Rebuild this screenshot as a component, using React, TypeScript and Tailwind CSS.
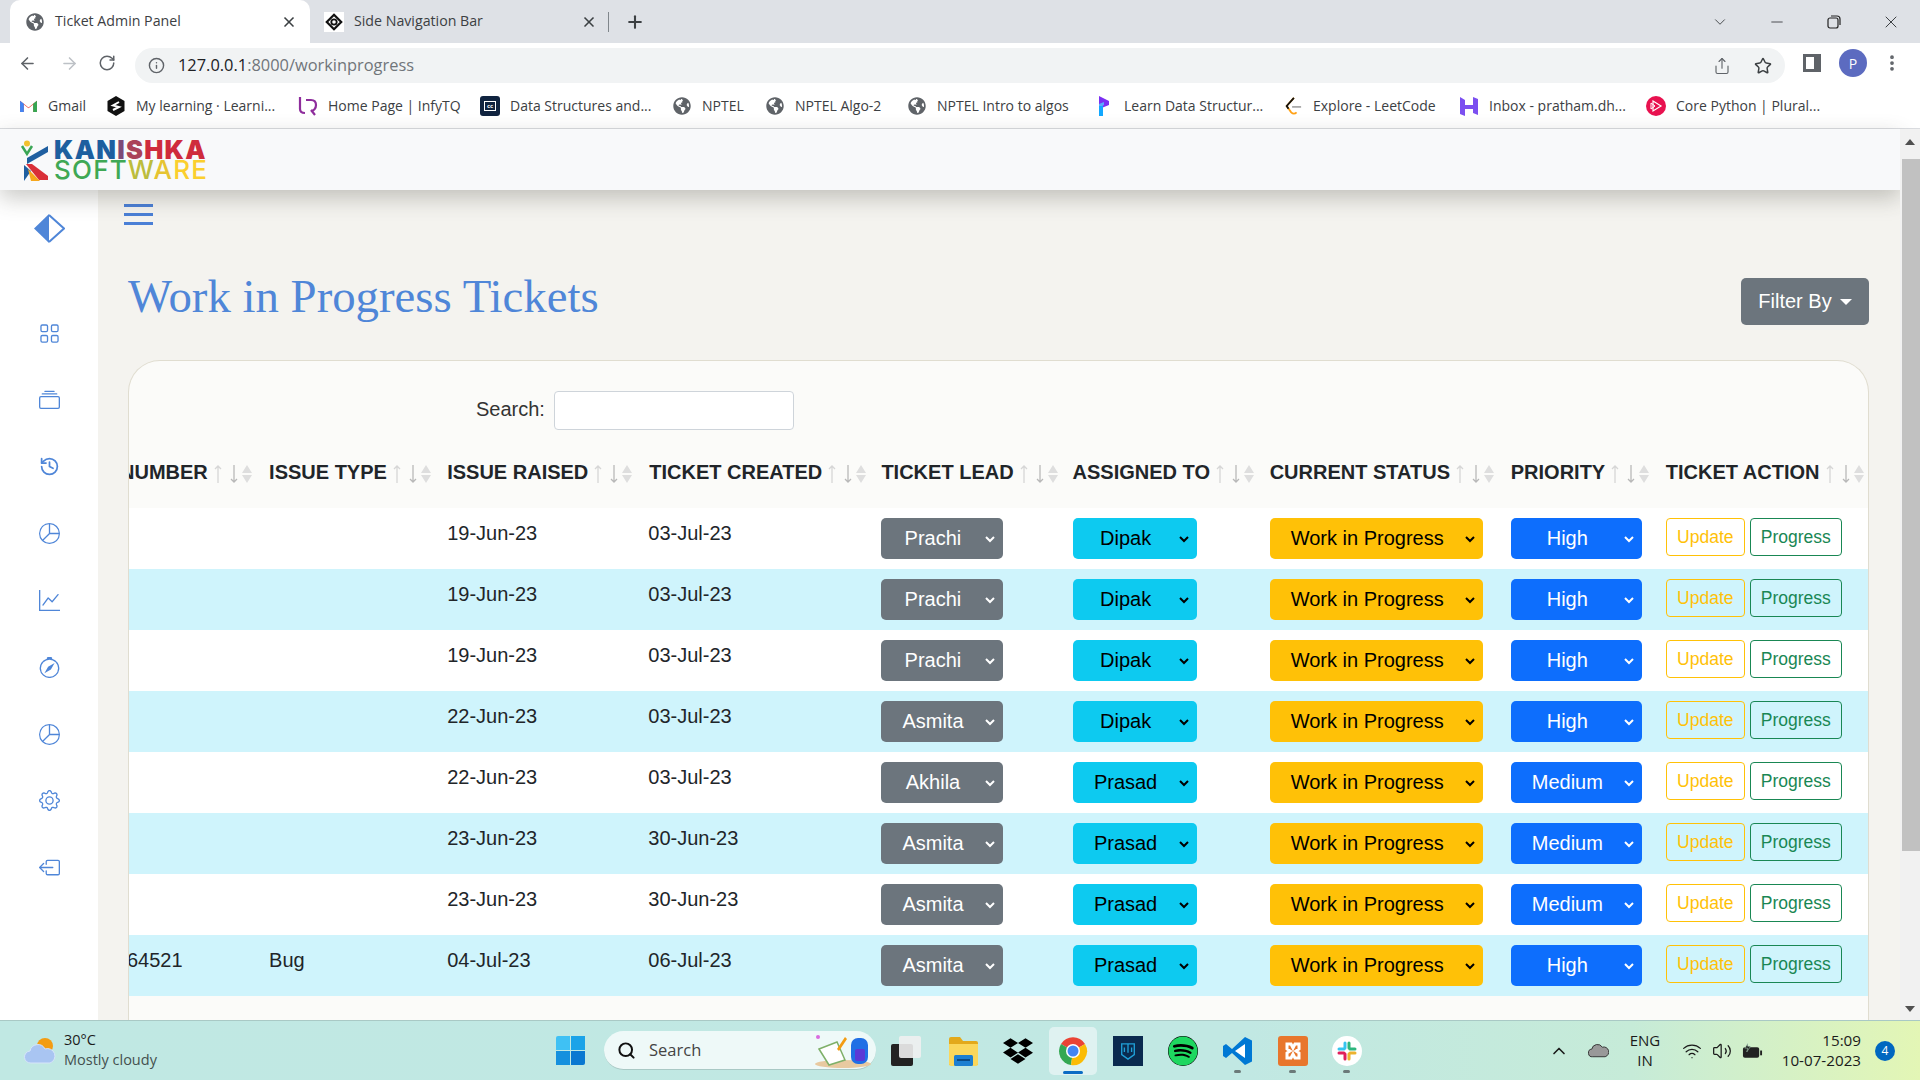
import React from "react";
import { BsGrid, BsCollection, BsPieChart, BsGraphUp, BsCompass, BsGear, BsBoxArrowLeft } from "react-icons/bs";
import { FaGlobeAmericas, FaDropbox, FaSpotify } from "react-icons/fa";
import { ArrowLeft, ArrowRight, RotateCw, Info, Star, X, Plus, ChevronDown, Minus, Search, ChevronUp, Wifi, Volume2, EllipsisVertical, History, Share } from "lucide-react";

const Globe = () => <FaGlobeAmericas className="w-[18px] h-[18px] text-[#5f6368] shrink-0" />;

const bookmarks: { label: string; w: string; icon: React.ReactNode }[] = [
  { label: "Gmail", w: "w-[88px]", icon: <svg viewBox="0 0 20 16" className="w-[19px] h-[15px]"><path d="M1 15V3l9 7 9-7v12h-4V7l-5 4-5-4v8z" fill="#ea4335" /><path d="M1 15V3l4 3v9z" fill="#4285f4" /><path d="M19 15V3l-4 3v9z" fill="#34a853" /></svg> },
  { label: "My learning · Learni...", w: "w-[192px]", icon: <svg viewBox="0 0 20 20" className="w-[20px] h-[20px]"><path d="M10 0l8.5 5v10L10 20 1.500 15V5z" fill="#111" /><path d="M13 6L7 9.500 13 11 7 14" fill="none" stroke="#fff" strokeWidth="2" /></svg> },
  { label: "Home Page | InfyTQ", w: "w-[182px]", icon: <svg viewBox="0 0 20 20" className="w-[20px] h-[20px]" fill="none" stroke="#8e2d9c" strokeWidth="2.200"><path d="M2 1v12c0 3 2 4 5 4" /><path d="M8 4h5c3 0 5 2 5 5s-2 6-5 6" /><path d="M13 14l4 5" /></svg> },
  { label: "Data Structures and...", w: "w-[192px]", icon: <span className="w-[20px] h-[20px] rounded-[3px] bg-[#10233f] flex items-center justify-center"><span className="w-[12px] h-[10px] border border-white text-[6px] leading-[8px] text-white text-center font-bold">cc</span></span> },
  { label: "NPTEL", w: "w-[93px]", icon: <Globe /> },
  { label: "NPTEL Algo-2", w: "w-[142px]", icon: <Globe /> },
  { label: "NPTEL Intro to algos", w: "w-[187px]", icon: <Globe /> },
  { label: "Learn Data Structur...", w: "w-[189px]", icon: <svg viewBox="0 0 16 20" className="w-[16px] h-[20px]"><path d="M3 0l10 5v4L3 13z" fill="#7b2ff2" /><path d="M3 8l5-2v3l-5 3z" fill="#5aa9ff" /><path d="M3 10h4v10H3z" fill="#12a8ff" /></svg> },
  { label: "Explore - LeetCode", w: "w-[176px]", icon: <svg viewBox="0 0 20 20" className="w-[18px] h-[20px]" fill="none" strokeWidth="2"><path d="M11 1L3 10l5 7c2 2 4 2 6 0" stroke="#ffa116" /><path d="M11 1L3 10l2 3" stroke="#111" /><path d="M9 11h10" stroke="#aaa" /></svg> },
  { label: "Inbox - pratham.dh...", w: "w-[187px]", icon: <svg viewBox="0 0 18 20" className="w-[18px] h-[20px]" fill="#7b4ff0"><path d="M0 1l5 3v5h8V1l5 2v16l-5-2v-4H5v7l-5-2z" /></svg> },
  { label: "Core Python | Plural...", w: "w-[180px]", icon: <svg viewBox="0 0 20 20" className="w-[20px] h-[20px]"><circle cx="10" cy="10" r="10" fill="#e8114f" /><path d="M7 5l8 5-8 5z" fill="none" stroke="#fff" strokeWidth="1.200" /><path d="M5 7l4 3-4 3z" fill="none" stroke="#fff" strokeWidth="1" /></svg> },
];

type Row = { num?: string; type?: string; raised: string; created: string; lead: string; to: string; prio: string };
const rows: Row[] = [
  { raised: "19-Jun-23", created: "03-Jul-23", lead: "Prachi", to: "Dipak", prio: "High" },
  { raised: "19-Jun-23", created: "03-Jul-23", lead: "Prachi", to: "Dipak", prio: "High" },
  { raised: "19-Jun-23", created: "03-Jul-23", lead: "Prachi", to: "Dipak", prio: "High" },
  { raised: "22-Jun-23", created: "03-Jul-23", lead: "Asmita", to: "Dipak", prio: "High" },
  { raised: "22-Jun-23", created: "03-Jul-23", lead: "Akhila", to: "Prasad", prio: "Medium" },
  { raised: "23-Jun-23", created: "30-Jun-23", lead: "Asmita", to: "Prasad", prio: "Medium" },
  { raised: "23-Jun-23", created: "30-Jun-23", lead: "Asmita", to: "Prasad", prio: "Medium" },
  { num: "64521", type: "Bug", raised: "04-Jul-23", created: "06-Jul-23", lead: "Asmita", to: "Prasad", prio: "High" },
];

const SortIcons = () => (
  <span className="inline-flex items-center ml-[6px] align-middle">
    <svg viewBox="0 0 8 20" className="w-[8px] h-[20px]" fill="none" stroke="#d6d6d6" strokeWidth="1.300"><path d="M4 19V2M1 5l3-3 3 3" /></svg>
    <svg viewBox="0 0 8 20" className="w-[8px] h-[20px] ml-[8px]" fill="none" stroke="#b8b8b8" strokeWidth="1.300"><path d="M4 1v17M1 15l3 3 3-3" /></svg>
    <svg viewBox="0 0 10 20" className="w-[10px] h-[20px] ml-[4px]" fill="#dedede"><path d="M5 1l5 8H0zM5 19l-5-8h10z" /></svg>
  </span>
);

const Sel = ({ label, cls }: { label: string; cls: string }) => (
  <div className={`relative h-[41px] rounded-[5px] pl-[14px] pr-[32px] flex items-center justify-center text-[20px] ${cls}`}>
    <span className="pb-[2px]">{label}</span>
    <svg viewBox="0 0 10 7" className="absolute right-[8px] top-[18px] w-[10px] h-[7px]" fill="none" stroke="currentColor" strokeWidth="2"><path d="M1 1l4 4 4-4" /></svg>
  </div>
);

const navIcons = [BsGrid, BsCollection, History, BsPieChart, BsGraphUp, BsCompass, BsPieChart, BsGear, BsBoxArrowLeft];
const headers: string[] = ["ISSUE TYPE", "ISSUE RAISED", "TICKET CREATED", "TICKET LEAD", "ASSIGNED TO", "CURRENT STATUS", "PRIORITY", "TICKET ACTION"];

export default function App() {
  return (
    <div className="w-[1920px] h-[1080px] overflow-hidden flex flex-col bg-white text-[#212529] font-['Liberation_Sans',Arial,sans-serif]">
      {/* tab strip */}
      <div className="h-[43px] bg-[#dee1e6] flex items-stretch pl-[10px] text-[14.2px] text-[#3c4043] font-['Open_Sans',sans-serif] shrink-0">
        <div className="w-[300px] bg-white rounded-t-[10px] flex items-center pl-[16px] pr-[13px]">
          <FaGlobeAmericas className="w-[18px] h-[18px] text-[#5f6368]" />
          <span className="ml-[11px] pb-[2px]">Ticket Admin Panel</span>
          <X className="ml-auto w-[16px] h-[16px] text-[#3c4043]" strokeWidth={2.500} />
        </div>
        <div className="w-[298px] flex items-center pl-[14px] pr-[11px]">
          <span className="w-[20px] h-[20px] bg-white flex items-center justify-center">
            <svg viewBox="0 0 20 20" className="w-[18px] h-[18px]" fill="none" stroke="#111" strokeWidth="2.500"><path d="M10 2l8 8-8 8-8-8z" /><circle cx="10" cy="10" r="3" strokeWidth="2" /></svg>
          </span>
          <span className="ml-[10px] pb-[2px]">Side Navigation Bar</span>
          <X className="ml-auto w-[16px] h-[16px] text-[#3c4043]" strokeWidth={2.500} />
        </div>
        <div className="w-px h-[20px] bg-[#80868b] self-center" />
        <Plus className="self-center ml-[16px] w-[20px] h-[20px] text-[#3c4043]" strokeWidth={2.500} />
        <div className="ml-auto flex items-center pr-[19px] text-[#3c4043]">
          <ChevronDown className="w-[18px] h-[18px]" strokeWidth={1.200} />
          <Minus className="ml-[39px] w-[18px] h-[18px]" strokeWidth={1.200} />
          <svg viewBox="0 0 14 14" className="ml-[41px] w-[14px] h-[16px]" fill="none" stroke="#222" strokeWidth="1.200"><rect x="1" y="3" width="10" height="10" rx="2" /><path d="M4 1h6a3 3 0 013 3v6" /></svg>
          <X className="ml-[40px] w-[20px] h-[20px]" strokeWidth={1.200} />
        </div>
      </div>
      {/* toolbar */}
      <div className="h-[40px] flex items-center bg-white shrink-0 relative">
        <ArrowLeft className="ml-[18px] w-[19px] h-[19px] text-[#5f6368]" strokeWidth={2} />
        <ArrowRight className="ml-[23px] w-[19px] h-[19px] text-[#bdc1c6]" strokeWidth={2} />
        <RotateCw className="ml-[19px] w-[18px] h-[18px] text-[#5f6368]" strokeWidth={2} />
        <div className="ml-[19px] mt-[5px] w-[1650px] h-[35px] rounded-full bg-[#f1f3f4] flex items-center pl-[13px] pr-[10px]">
          <Info className="w-[17px] h-[17px] text-[#5f6368]" strokeWidth={2} />
          <span className="ml-[13px] text-[16.4px] text-[#70757a] font-['Open_Sans',sans-serif]"><span className="text-[#202124]">127.0.0.1</span>:8000/workinprogress</span>
          <Share className="ml-auto mr-[1px] w-[18px] h-[18px] text-[#5f6368]" strokeWidth={1.500} />
          <Star className="ml-[22px] mr-[3px] w-[18px] h-[18px] text-[#3c4043]" strokeWidth={2} />
        </div>
        <div className="ml-[18px] w-[18px] h-[18px] border-[3px] border-[#5f6368] border-r-[7px]" />
        <div className="ml-[18px] w-[28px] h-[28px] rounded-full bg-[#5c6bc0] text-white text-[14px] flex items-center justify-center font-['Open_Sans',sans-serif]">P</div>
        <EllipsisVertical className="ml-[15px] w-[20px] h-[20px] text-[#5f6368]" strokeWidth={2.500} />
      </div>
      {/* bookmarks */}
      <div className="h-[46px] flex items-center pl-[18px] border-b border-[#dadce0] bg-white text-[14px] text-[#3c4043] font-['Open_Sans',sans-serif] shrink-0">
        {bookmarks.map((b) => (
          <div key={b.label} className={`${b.w} flex items-center shrink-0 whitespace-nowrap`}>
            <span className="w-[20px] flex justify-center shrink-0">{b.icon}</span>
            <span className="ml-[10px]">{b.label}</span>
          </div>
        ))}
      </div>
      {/* page */}
      <div className="flex-1 flex min-h-0">
        <div className="flex-1 flex flex-col min-w-0">
          <div className="h-[61px] bg-[#f8f9fa] relative z-10 shadow-[0_8px_22px_rgba(60,60,50,0.28)] pl-[19px] flex items-center shrink-0">
            <svg viewBox="0 0 30 42" className="w-[30px] h-[42px] mt-[2px]">
              <circle cx="8" cy="3.500" r="3" fill="#f2c12e" />
              <path d="M3 6l5 8 5-8" fill="none" stroke="#3aa655" strokeWidth="2.500" />
              <path d="M29 6v6L8 24v-6z" fill="#1f5fa0" />
              <path d="M7 24h6l16 12v4h-9z" fill="#d92f37" />
              <path d="M5 25l7 6-7 10z" fill="#1f5fa0" />
              <path d="M9 29l12 12h-9z" fill="#f6a71c" />
            </svg>
            <div className="ml-[5px] flex flex-col w-[155px] leading-none">
              <span className="text-[25.500px] leading-[20px] font-black font-['Inter',sans-serif] tracking-[1.3px] whitespace-nowrap">
                <span className="text-[#1d5f9f]">KAN</span><span className="text-[#7c4a78]">I</span><span className="text-[#aa4258]">S</span><span className="text-[#cf2b3c]">HKA</span>
              </span>
              <span className="text-[26px] leading-[20px] font-medium font-['Inter',sans-serif] tracking-[1.2px] whitespace-nowrap">
                <span className="text-[#3fa854]">SOFT</span><span className="text-[#bcbd3c]">W</span><span className="text-[#e6c432]">A</span><span className="text-[#fbcf2e]">RE</span>
              </span>
            </div>
          </div>
          <div className="flex-1 flex min-h-0">
            {/* sidebar */}
            <aside className="w-[98px] bg-white flex flex-col items-center pt-[23px] shrink-0">
              <svg viewBox="0 0 32 31" className="w-[32px] h-[31px]">
                <path d="M16 1L1 15.500 16 30z" fill="#4f86d8" />
                <path d="M16 2l15 13.500L16 29" fill="none" stroke="#4f86d8" strokeWidth="2" />
              </svg>
              <div className="mt-[56px] flex flex-col">
                {navIcons.map((Icon, i) => (
                  <div key={i} className="h-[66.8px] flex items-center justify-center">
                    <Icon className="w-[21px] h-[21px] text-[#4f86d8]" />
                  </div>
                ))}
              </div>
            </aside>
            {/* main */}
            <main className="flex-1 bg-[#f4f3ef] flex flex-col min-w-0 pr-[31px]">
              <div className="pl-[26px] pt-[14px] flex flex-col gap-[6px] shrink-0 w-max">
                <div className="w-[29px] h-[3px] bg-[#4a7fd6]" />
                <div className="w-[29px] h-[3px] bg-[#4a7fd6]" />
                <div className="w-[29px] h-[3px] bg-[#4a7fd6]" />
              </div>
              <div className="pl-[30px] flex items-start justify-between mt-[53px] shrink-0 h-[82px]">
                <h1 className="text-[46.8px] leading-[50px] -mt-[7px] text-[#4f86d8] font-['Liberation_Serif',serif]">Work in Progress Tickets</h1>
                <button className="w-[128px] h-[47px] rounded-[5px] bg-[#6c757d] text-white text-[20px] flex items-center justify-center">
                  <span className="pb-[1px]">Filter By</span>
                  <span className="ml-[8px] w-0 h-0 border-x-[6px] border-x-transparent border-t-[6px] border-t-white" />
                </button>
              </div>
              <section className="ml-[30px] flex-1 min-h-0 rounded-t-[32px] border border-b-0 border-[#e0ddd0] bg-[#fbfbf9] overflow-hidden flex flex-col">
                <div className="flex items-center pl-[347px] pt-[30px] h-[69px] shrink-0 text-[20px] text-[#333]">
                  <span className="pb-[3px]">Search:</span>
                  <input aria-label="Search" className="ml-[9px] w-[240px] h-[39px] bg-white border border-[#ced4da] rounded-[4px]" />
                </div>
                <table className="table-fixed w-[1739px] border-collapse text-[20px] leading-[30px] shrink-0">
                  <colgroup>
                    <col className="w-[140px]" /><col className="w-[178px]" /><col className="w-[202px]" /><col className="w-[232px]" /><col className="w-[191px]" /><col className="w-[197px]" /><col className="w-[241px]" /><col className="w-[155px]" /><col className="w-[202px]" />
                  </colgroup>
                  <thead>
                    <tr className="h-[78px]">
                      <th className="text-left font-bold whitespace-nowrap pt-[27px] pb-[21px]"><span className="-ml-[9px]">NUMBER</span><SortIcons /></th>
                      {headers.map((h) => (
                        <th key={h} className="text-left font-bold whitespace-nowrap pt-[27px] pb-[21px]">{h}<SortIcons /></th>
                      ))}
                    </tr>
                  </thead>
                  <tbody>
                    {rows.map((r, i) => (
                      <tr key={i} className={i % 2 === 0 ? "h-[61px] bg-white" : "h-[61px] bg-[#cff4fc]"}>
                        <td className="align-top pt-[10px]"><span className="-ml-[2px]">{r.num}</span></td>
                        <td className="align-top pt-[10px]">{r.type}</td>
                        <td className="align-top pt-[10px]">{r.raised}</td>
                        <td className="align-top pt-[10px]"><span className="-ml-px">{r.created}</span></td>
                        <td className="align-top pt-[10px] pr-[70px]"><Sel label={r.lead} cls="bg-[#6c757d] text-white" /></td>
                        <td className="align-top pt-[10px] pr-[73px]"><Sel label={r.to} cls="bg-[#0dcaf0] text-black" /></td>
                        <td className="align-top pt-[10px] pr-[28px]"><Sel label="Work in Progress" cls="bg-[#ffc107] text-black" /></td>
                        <td className="align-top pt-[10px] pr-[24px]"><Sel label={r.prio} cls="bg-[#0d6efd] text-white" /></td>
                        <td className="align-top pt-[10px]">
                          <div className="flex gap-[5px] text-[17.500px]">
                            <button className="w-[79px] h-[38px] rounded-[4px] border border-[#ffc107] text-[#ffc107]">Update</button>
                            <button className="w-[92px] h-[38px] rounded-[4px] border border-[#198754] text-[#198754]">Progress</button>
                          </div>
                        </td>
                      </tr>
                    ))}
                  </tbody>
                </table>
              </section>
            </main>
          </div>
        </div>
        {/* page scrollbar */}
        <div className="w-[20px] bg-[#f1f1f1] flex flex-col items-center shrink-0 relative z-20">
          <div className="h-[25px] flex items-center justify-center shrink-0"><span className="w-0 h-0 border-x-[5px] border-x-transparent border-b-[6px] border-b-[#505050]" /></div>
          <div className="h-[5px] shrink-0" />
          <div className="w-[18px] ml-[1px] h-[692px] bg-[#c1c1c1] shrink-0" />
          <div className="flex-1" />
          <div className="h-[22px] flex items-center justify-center shrink-0"><span className="w-0 h-0 border-x-[5px] border-x-transparent border-t-[6px] border-t-[#505050]" /></div>
        </div>
      </div>
      {/* taskbar */}
      <footer className="h-[60px] shrink-0 relative z-30 border-t border-[#a9c9c5] bg-[linear-gradient(90deg,#c0e8e3_0%,#c1e8e3_65%,#c6ebd8_85%,#e3f6b5_100%)] flex items-center text-[#1b1b1b] font-['Open_Sans',sans-serif]">
        <svg viewBox="0 0 32 30" className="ml-[24px] w-[32px] h-[30px] shrink-0">
          <circle cx="21" cy="10" r="8" fill="#f39c12" />
          <path d="M7 27a6 6 0 01-1-12 8 8 0 0115-2 7 7 0 015 14z" fill="#a9c5f2" stroke="#d6e4fa" />
        </svg>
        <div className="ml-[8px] w-[140px] text-[14.5px] leading-[20px] -mt-[2px] shrink-0">
          <div>30°C</div>
          <div className="text-[#44504f]">Mostly cloudy</div>
        </div>
        <div className="ml-[352px] grid grid-cols-2 gap-[1px] w-[29px] h-[29px] shrink-0">
          <span className="bg-[#3fc1f4] rounded-tl-[2px]" /><span className="bg-[#1aa3e8]" /><span className="bg-[#1590de]" /><span className="bg-[#0a78d1] rounded-br-[2px]" />
        </div>
        <div className="ml-[19px] w-[272px] h-[39px] rounded-full bg-[#eef9f8] border-b border-[#a9c9c5] flex items-center pl-[13px] shrink-0">
          <Search className="w-[19px] h-[19px] text-[#111]" strokeWidth={2.500} />
          <span className="ml-[13px] text-[16.5px] text-[#444]">Search</span>
          <svg viewBox="0 0 62 38" className="ml-auto mr-[1px] w-[62px] h-[38px]">
            <ellipse cx="30" cy="33" rx="28" ry="4" fill="#e8c9a0" />
            <path d="M6 18l18-7 8 18-16 5z" fill="#fff" stroke="#7fb069" strokeWidth="1.500" />
            <path d="M24 18l8-12 2 2-8 12z" fill="#f39c12" />
            <rect x="38" y="7" width="17" height="26" rx="7" fill="#1f6fe5" />
            <rect x="42" y="18" width="10" height="12" rx="2" fill="#5b39d6" />
            <circle cx="5" cy="6" r="2" fill="#d96be0" />
          </svg>
        </div>
        {/* pinned apps */}
        <div className="ml-[15px] w-[30px] h-[30px] relative shrink-0">
          <span className="absolute left-0 bottom-0 w-[22px] h-[22px] bg-[#222] rounded-[2px]" />
          <span className="absolute right-0 top-0 w-[22px] h-[22px] bg-[#f0f0f0]/90 rounded-[2px]" />
        </div>
        <svg viewBox="0 0 30 32" className="ml-[27px] w-[30px] h-[32px] shrink-0">
          <path d="M1 4a2 2 0 012-2h9l3 4h13a2 2 0 012 2v22H1z" fill="#e3a91b" />
          <path d="M1 9h29v20a2 2 0 01-2 2H3a2 2 0 01-2-2z" fill="#fbd75b" />
          <rect x="6" y="20" width="19" height="11" rx="1.500" fill="#1d7fd1" />
          <rect x="9" y="24" width="13" height="2" fill="#0b4a85" />
        </svg>
        <FaDropbox className="ml-[25px] w-[30px] h-[30px] text-black shrink-0" />
        <div className="ml-[16px] w-[48px] h-[48px] rounded-[5px] bg-[#dff2f1] relative flex items-center justify-center shrink-0">
          <svg viewBox="0 0 30 30" className="w-[30px] h-[30px]">
            <path d="M15 15L3 8a14 14 0 0124 0z" fill="#ea4335" />
            <path d="M15 15L3 8a14 14 0 0010 21z" fill="#34a853" />
            <path d="M15 15l12-7a14 14 0 01-14 21z" fill="#fbbc05" />
            <circle cx="15" cy="15" r="7" fill="#fff" />
            <circle cx="15" cy="15" r="5.500" fill="#4285f4" />
          </svg>
          <span className="absolute bottom-[1px] left-[14px] w-[20px] h-[3px] rounded-full bg-[#0a6cc4]" />
        </div>
        <div className="ml-[16px] w-[30px] h-[30px] bg-[#0a2a4f] flex items-center justify-center shrink-0">
          <svg viewBox="0 0 20 22" className="w-[18px] h-[20px]" fill="none" stroke="#1f9fd8" strokeWidth="1.500"><path d="M3 3h14v12l-7 5-7-5zM10 3v10M6 7v5M14 7v5" /></svg>
        </div>
        <FaSpotify className="ml-[25px] w-[30px] h-[30px] text-[#1ed760] bg-black rounded-full shrink-0" />
        <div className="ml-[25px] relative w-[30px] h-[30px] shrink-0">
          <svg viewBox="0 0 30 30" className="w-[30px] h-[30px]">
            <path d="M22 1l7 3.500v21L22 29 9 17 3 22l-3-2v-10l3-2 6 5z" fill="#0078d4" />
            <path d="M22 8L12 15l10 7z" fill="#fff" />
          </svg>
          <span className="absolute -bottom-[7px] left-[11px] w-[7px] h-[3px] rounded-full bg-[#6b7a79]" />
        </div>
        <div className="ml-[25px] relative w-[30px] h-[30px] bg-[#e8762c] rounded-[3px] flex items-center justify-center shrink-0">
          <svg viewBox="0 0 20 20" className="w-[20px] h-[20px]" fill="none" stroke="#fff" strokeWidth="3"><path d="M4 3h4l2 4 2-4h4v5l-3 2 3 2v5h-4l-2-4-2 4H4v-5l3-2-3-2z" /></svg>
          <span className="absolute -bottom-[7px] left-[11px] w-[7px] h-[3px] rounded-full bg-[#6b7a79]" />
        </div>
        <div className="ml-[24px] relative w-[30px] h-[30px] rounded-full bg-white flex items-center justify-center shrink-0">
          <svg viewBox="0 0 20 20" className="w-[20px] h-[20px]" strokeWidth="3" strokeLinecap="round" fill="none">
            <path d="M8 2v5" stroke="#36c5f0" /><path d="M2 8h5" stroke="#36c5f0" />
            <path d="M18 8h-5" stroke="#2eb67d" /><path d="M12 2v5" stroke="#2eb67d" />
            <path d="M12 18v-5" stroke="#ecb22e" /><path d="M18 12h-5" stroke="#ecb22e" />
            <path d="M2 12h5" stroke="#e01e5a" /><path d="M8 18v-5" stroke="#e01e5a" />
          </svg>
          <span className="absolute -bottom-[7px] left-[11px] w-[7px] h-[3px] rounded-full bg-[#6b7a79]" />
        </div>
        {/* tray */}
        <ChevronUp className="ml-[187px] w-[20px] h-[20px] shrink-0" strokeWidth={2} />
        <svg viewBox="0 0 22 14" className="ml-[19px] w-[21px] h-[14px] shrink-0"><path d="M5 13a4 4 0 01-1-8 6 6 0 0111-2 5 5 0 013 10z" fill="#999" stroke="#333" strokeWidth="1" /></svg>
        <div className="ml-[11px] w-[50px] text-center text-[15px] leading-[20px] -mt-[2px] shrink-0">ENG<br />IN</div>
        <Wifi className="ml-[12px] w-[20px] h-[20px] shrink-0" strokeWidth={1.500} />
        <Volume2 className="ml-[10px] w-[20px] h-[20px] shrink-0" strokeWidth={1.500} />
        <svg viewBox="0 0 22 16" className="ml-[10px] w-[21px] h-[16px] shrink-0">
          <rect x="1" y="4" width="17" height="11" rx="2" fill="#222" />
          <rect x="19" y="7.500" width="2" height="5" fill="#222" />
          <path d="M6 0L3 5h3l-1 4 4-6H6z" fill="#222" stroke="#c5ebd3" strokeWidth="0.500" />
        </svg>
        <div className="ml-[10px] w-[88px] text-right text-[15.2px] leading-[20px] -mt-[2px] shrink-0 whitespace-nowrap">15:09<br />10-07-2023</div>
        <div className="ml-[14px] w-[20px] h-[20px] rounded-full bg-[#0067c0] text-white text-[12px] flex items-center justify-center shrink-0">4</div>
      </footer>
    </div>
  );
}
